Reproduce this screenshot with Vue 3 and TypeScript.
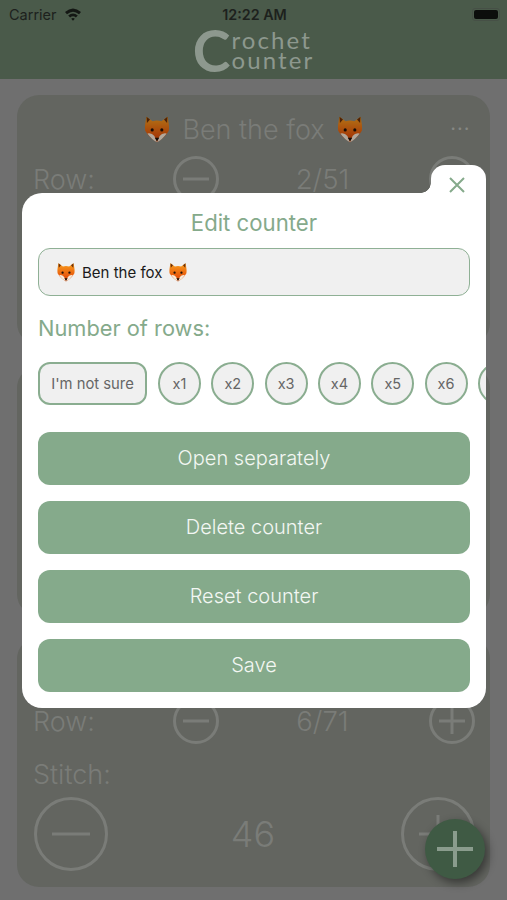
<script setup lang="ts">
interface Counter {
  id: number
  name?: string
  row?: string
  stitch?: string
}

// only what the open modal leaves visible is filled in
const counters: Counter[] = [
  { id: 1, name: 'Ben the fox', row: '2/51' },
  { id: 2 },
  { id: 3, row: '6/71', stitch: '46' },
]

const multipliers = ['x1', 'x2', 'x3', 'x4', 'x5', 'x6']
const actions = ['Open separately', 'Delete counter', 'Reset counter', 'Save']
</script>

<template>
  <div class="screen">
    <svg class="defs" aria-hidden="true">
      <defs>
        <linearGradient id="fur" x1="0" y1="0" x2="0" y2="1">
          <stop offset="0" stop-color="#f9a01e" />
          <stop offset="0.7" stop-color="#e8590c" />
          <stop offset="1" stop-color="#c8430a" />
        </linearGradient>
        <symbol id="fox" viewBox="0 0 32 32">
          <path d="M4 2 L11 7 Q16 5.500 21 7 L28 2 Q30.500 13 29.500 18 Q25 26 16 31 Q7 26 2.500 18 Q1.500 13 4 2 Z" fill="url(#fur)" />
          <path d="M4 2 L8 5 L4.500 9 Z M28 2 L24 5 L27.500 9 Z" fill="#6b2f0a" />
          <path d="M5 21 Q10 20 13 24 L16 31 Q10 28 5 21 Z M27 21 Q22 20 19 24 L16 31 Q22 28 27 21 Z" fill="#f6ead9" />
          <circle cx="10.500" cy="17" r="1.800" fill="#1d1009" />
          <circle cx="21.500" cy="17" r="1.800" fill="#1d1009" />
          <path d="M13.500 26 H18.500 L16 30 Z" fill="#1d1009" />
        </symbol>
      </defs>
    </svg>

    <header class="top">
      <div class="status">
        <div class="status-left">
          <span>Carrier</span>
          <svg class="wifi" viewBox="0 0 18 14" width="18" height="14">
            <path d="M1 5 Q9 -2 17 5 L15 7.200 Q9 2.200 3 7.200 Z" />
            <path d="M4.200 8.500 Q9 4.300 13.800 8.500 L11.900 10.500 Q9 8.200 6.100 10.500 Z" />
            <path d="M7.200 11.700 Q9 10.400 10.800 11.700 L9 13.700 Z" />
          </svg>
        </div>
        <span class="clock">12:22 AM</span>
        <div class="battery"><i /></div>
      </div>
      <div class="logo">
        <span class="logo-c">C</span>
        <div class="logo-words">rochet<br />ounter</div>
      </div>
    </header>

    <main class="list">
      <section v-for="c in counters" :key="c.id" class="card">
        <div class="card-title">
          <template v-if="c.name">
            <svg class="fox dim" width="28" height="28"><use href="#fox" /></svg>
            <span>{{ c.name }}</span>
            <svg class="fox dim" width="28" height="28"><use href="#fox" /></svg>
            <span class="dots">···</span>
          </template>
        </div>
        <div v-if="c.row" class="row-line">
          <span class="lbl">Row:</span>
          <svg viewBox="0 0 46 46" width="46" height="46" class="ring">
            <circle cx="23" cy="23" r="21.500" />
            <path d="M10 23 H36" />
          </svg>
          <span class="row-val">{{ c.row }}</span>
          <svg viewBox="0 0 46 46" width="46" height="46" class="ring">
            <circle cx="23" cy="23" r="21.500" />
            <path d="M10 23 H36 M23 10 V36" />
          </svg>
        </div>
        <template v-if="c.stitch">
          <div class="lbl stitch-lbl">Stitch:</div>
          <div class="stitch-line">
            <svg viewBox="0 0 74 74" width="74" height="74" class="ring">
              <circle cx="37" cy="37" r="35.500" />
              <path d="M18 37 H56" />
            </svg>
            <span class="stitch-val">{{ c.stitch }}</span>
            <svg viewBox="0 0 74 74" width="74" height="74" class="ring">
              <circle cx="37" cy="37" r="35.500" />
              <path d="M18 37 H56 M37 18 V56" />
            </svg>
          </div>
        </template>
      </section>
    </main>

    <button class="fab" type="button" aria-label="Add counter">
      <svg viewBox="0 0 36 36" width="36" height="36">
        <path d="M0 18 H36 M18 0 V36" />
      </svg>
    </button>

    <div class="modal">
      <div class="close-tab">
        <svg viewBox="0 0 16 16" width="16" height="16">
          <path d="M1 1 L15 15 M15 1 L1 15" />
        </svg>
      </div>
      <h2 class="modal-title">Edit counter</h2>
      <div class="name-field">
        <svg class="fox" width="20" height="20"><use href="#fox" /></svg>
        <span>Ben the fox</span>
        <svg class="fox" width="20" height="20"><use href="#fox" /></svg>
      </div>
      <div class="rows-lbl">Number of rows:</div>
      <div class="chips">
        <span class="chip unsure">I'm not sure</span>
        <span v-for="m in multipliers" :key="m" class="chip round">{{ m }}</span>
        <span class="chip round" />
      </div>
      <div class="actions">
        <button v-for="a in actions" :key="a" class="action" type="button">{{ a }}</button>
      </div>
    </div>
  </div>
</template>

<style scoped>
.screen {
  position: relative;
  width: 507px;
  height: 900px;
  overflow: hidden;
  background: #6f6f6f;
  font-family: Inter, "Liberation Sans", sans-serif;
}

.defs {
  position: absolute;
  width: 0;
  height: 0;
}

.top {
  height: 79px;
  background: #4a5a4a;
  display: flex;
  flex-direction: column;
}

.status {
  height: 28px;
  padding: 0 7px 0 9px;
  display: grid;
  grid-template-columns: 1fr auto 1fr;
  align-items: center;
  color: #1d211d;
  font-size: 14.500px;
}

.status-left {
  display: flex;
  align-items: center;
  gap: 7px;
}

.wifi {
  fill: #141714;
}

.clock {
  font-size: 14.300px;
  font-weight: 600;
}

.battery {
  justify-self: end;
  width: 24px;
  height: 9px;
  padding: 1px;
  border: 1px solid #465046;
  border-radius: 3px;
  box-sizing: content-box;
  display: flex;
}

.battery i {
  flex: 1;
  background: #0c0e0c;
  border-radius: 2px;
}

.logo {
  height: 44px;
  display: flex;
  justify-content: center;
  align-items: center;
  color: #8d988e;
}

.logo-c {
  font-family: Lato, sans-serif;
  font-size: 57px;
  font-weight: 700;
  line-height: 44px;
  margin-right: 1px;
}

.logo-words {
  font-family: Lato, sans-serif;
  font-size: 24px;
  line-height: 20px;
  letter-spacing: 2.100px;
}

.list {
  padding: 16px 17px 0;
  display: flex;
  flex-direction: column;
  gap: 21px;
}

.card {
  height: 250px;
  box-sizing: border-box;
  padding: 16px 15px 0 17px;
  background: #636560;
  border-radius: 22px;
  color: #7a7c78;
  font-weight: 300;
}

.card-title {
  position: relative;
  height: 36px;
  display: flex;
  justify-content: center;
  align-items: center;
  gap: 11px;
  font-size: 27px;
  padding-right: 2px;
}

.fox {
  flex: none;
}

.dim {
  filter: brightness(0.72);
}

.dots {
  position: absolute;
  right: 5px;
  top: 0;
  font-size: 24px;
  line-height: 36px;
  color: #868884;
}

.row-line {
  margin-top: 9px;
  display: grid;
  grid-template-columns: 139px 46px 1fr 46px;
  align-items: center;
  height: 46px;
}

.lbl {
  font-size: 27px;
  margin-left: -1px;
}

.row-val {
  text-align: center;
  font-size: 27.500px;
  padding-right: 3px;
}

.ring {
  fill: none;
  stroke: #7a7c78;
  stroke-width: 3;
}

.stitch-lbl {
  margin-top: 13px;
  line-height: 36px;
}

.stitch-line {
  margin-top: 4px;
  display: flex;
  justify-content: space-between;
  align-items: center;
}

.stitch-val {
  font-size: 36px;
  padding-right: 3px;
}

.fab {
  position: absolute;
  left: 425px;
  top: 819px;
  width: 60px;
  height: 60px;
  padding: 0;
  border: 0;
  border-radius: 50%;
  background: #3f5a44;
  box-shadow: 3px 4px 10px rgba(0, 0, 0, 0.45);
  display: flex;
  align-items: center;
  justify-content: center;
}

.fab path {
  fill: none;
  stroke: #8a9c8d;
  stroke-width: 4;
}

.modal {
  position: absolute;
  left: 22px;
  top: 193px;
  width: 464px;
  height: 515px;
  box-sizing: border-box;
  padding: 0 16px;
  background: #fff;
  border-radius: 20px 0 20px 20px;
  display: flex;
  flex-direction: column;
}

.close-tab {
  position: absolute;
  right: 0;
  top: -28px;
  width: 55px;
  height: 44px;
  background: #fff;
  border-radius: 14px 14px 0 0;
  display: flex;
  justify-content: center;
  padding: 12px 3px 0 0;
  box-sizing: border-box;
}

.close-tab::before {
  content: "";
  position: absolute;
  left: -10px;
  top: 18px;
  width: 10px;
  height: 10px;
  background: radial-gradient(circle at 0 0, transparent 9.500px, #fff 10px);
}

.close-tab path {
  fill: none;
  stroke: #85aa8b;
  stroke-width: 2;
}

.modal-title {
  margin: 15px 0 0;
  height: 30px;
  font-size: 22.200px;
  font-weight: 400;
  line-height: 30px;
  text-align: center;
  color: #85aa8b;
}

.name-field {
  margin-top: 10px;
  height: 48px;
  box-sizing: border-box;
  padding: 0 17px;
  background: #f0f0f0;
  border: 1.500px solid #8fb095;
  border-radius: 12px;
  display: flex;
  align-items: center;
  gap: 6px;
  font-size: 15px;
  color: #1a1a1a;
}

.rows-lbl {
  margin-top: 18px;
  height: 28px;
  font-size: 21.800px;
  line-height: 28px;
  color: #85aa8b;
}

.chips {
  margin: 20px -16px 0 0;
  height: 43px;
  overflow: hidden;
  display: flex;
  gap: 11px;
}

.chip {
  flex: none;
  box-sizing: border-box;
  height: 43px;
  background: #f0f0f0;
  border: 2px solid #8aad90;
  display: flex;
  align-items: center;
  justify-content: center;
  font-size: 14.500px;
  color: #666;
}

.unsure {
  width: 109px;
  border-radius: 12px;
  font-size: 14.800px;
}

.round {
  width: 43px;
  border-radius: 50%;
  margin-right: -0.700px;
}

.actions {
  margin-top: 26.700px;
  display: flex;
  flex-direction: column;
  gap: 16.200px;
}

.action {
  height: 53px;
  padding: 0 0 1px;
  border: 0;
  border-radius: 12px;
  background: #85aa8b;
  color: #f3f7f3;
  font-family: inherit;
  font-size: 20px;
  font-weight: 350;
}
</style>
